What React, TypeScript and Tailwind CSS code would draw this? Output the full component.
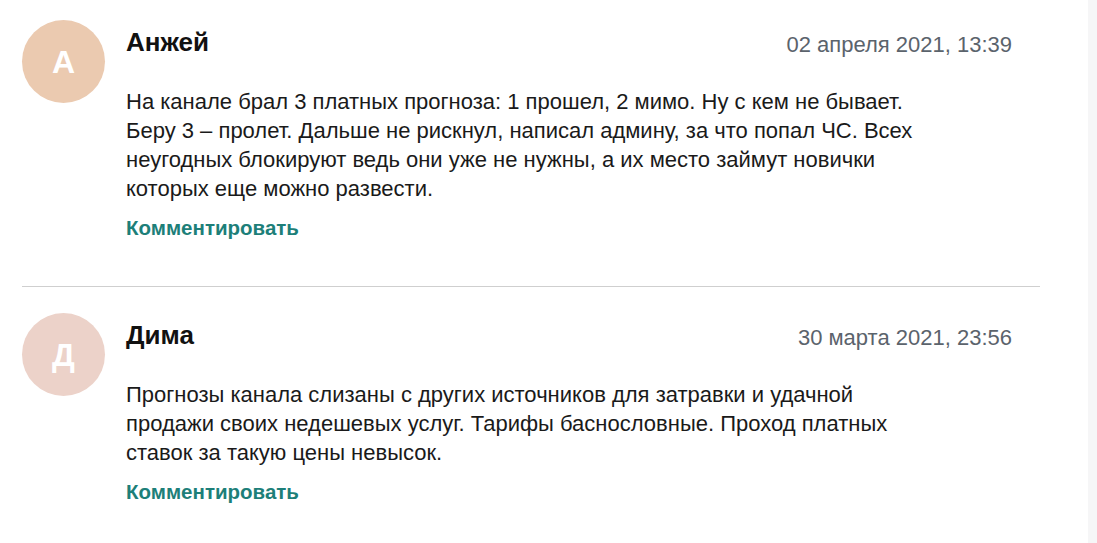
import React from "react";

// --- TIPAGEM ---
interface Comentario {
  id: number;
  nome: string;
  inicial: string;
  cor: string;
  data: string;
  texto: string;
}

const COMENTARIOS: Comentario[] = [
  {
    id: 1,
    nome: "Анжей",
    inicial: "А",
    cor: "bg-[#ebcab0]",
    data: "02 апреля 2021, 13:39",
    texto:
      "На канале брал 3 платных прогноза: 1 прошел, 2 мимо. Ну с кем не бывает. Беру 3 – пролет. Дальше не рискнул, написал админу, за что попал ЧС. Всех неугодных блокируют ведь они уже не нужны, а их место займут новички которых еще можно развести.",
  },
  {
    id: 2,
    nome: "Дима",
    inicial: "Д",
    cor: "bg-[#ecd2c9]",
    data: "30 марта 2021, 23:56",
    texto:
      "Прогнозы канала слизаны с других источников для затравки и удачной продажи своих недешевых услуг. Тарифы баснословные. Проход платных ставок за такую цены невысок.",
  },
];

const CommentItem: React.FC<{ c: Comentario; first: boolean }> = ({ c, first }) => (
  <div className={`flex ${first ? "pt-[20px] pb-[45px] border-b border-[#cfcfcf]" : "pt-[26px]"}`}>
    <div
      className={`w-[83px] h-[83px] shrink-0 rounded-full ${c.cor} flex items-center justify-center text-white font-bold text-[32px]`}
    >
      {c.inicial}
    </div>
    <div className="flex-1 ml-[21px] pr-[28px] pt-[7px]">
      <div className="flex justify-between items-start">
        <span className="text-[26px] leading-[30px] font-bold text-[#111]">{c.nome}</span>
        <span className="text-[22px] leading-[30px] mt-[3px] text-[#5b636c]">{c.data}</span>
      </div>
      <p className="mt-[27px] max-w-[800px] text-[22px] leading-[29px] text-[#1a1a1a]">{c.texto}</p>
      <div className="mt-[12px] text-[20.5px] leading-[26px] font-bold text-[#1d7f79]">
        Комментировать
      </div>
    </div>
  </div>
);

const App: React.FC = () => {
  return (
    <div className="w-screen h-screen flex bg-white overflow-hidden font-['Liberation_Sans',Arial,sans-serif]">
      <div className="w-[1088px] shrink-0 pl-[22px]">
        <div className="w-[1018px]">
          {COMENTARIOS.map((c, i) => (
            <CommentItem key={c.id} c={c} first={i === 0} />
          ))}
        </div>
      </div>
      <div className="flex-1 bg-[#f6f6f7]" />
    </div>
  );
};

export default App;
